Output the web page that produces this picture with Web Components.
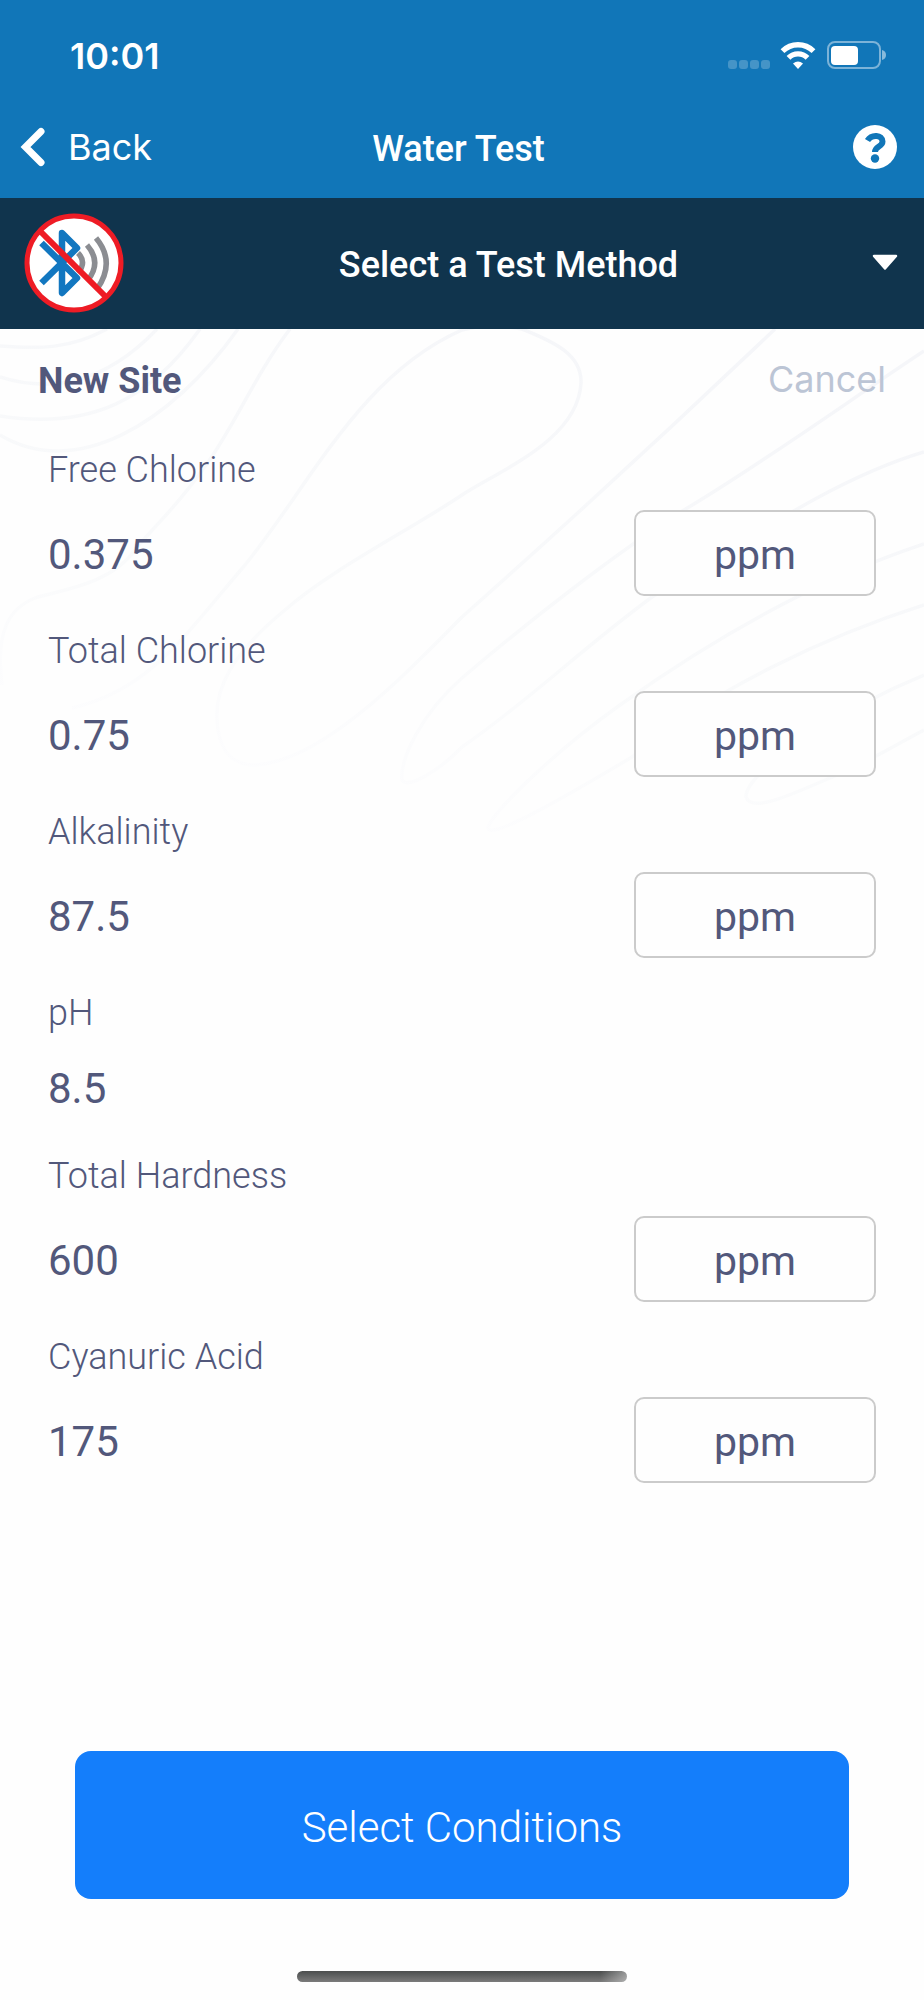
<!DOCTYPE html>
<html lang="en">
<head>
<meta charset="utf-8">
<meta name="viewport" content="width=device-width, initial-scale=1">
<title>Water Test</title>
<style>
  html, body { margin: 0; padding: 0; }
  body { background: #fefefe; color: #52587b; font-family: Roboto, "Open Sans", sans-serif; }
</style>
</head>
<body>
<water-test-page></water-test-page>

<template id="status-bar">
  <style>
    :host { display: flex; align-items: center; justify-content: space-between; height: 112px; padding: 0 37px 0 70px; box-sizing: border-box; }
    time { font: 600 36px/44px Inter, sans-serif; }
    svg { display: block; }
  </style>
  <time>10:01</time>
  <svg width="160" height="30" viewBox="727 41 160 30" aria-label="Wi-Fi connected, battery half full" role="img">
    <g fill="#fff" fill-opacity=".22">
      <rect x="728" y="60" width="9" height="9" rx="3"/><rect x="739" y="60" width="9" height="9" rx="3"/>
      <rect x="750" y="60" width="9" height="9" rx="3"/><rect x="761" y="60" width="9" height="9" rx="3"/>
    </g>
    <g fill="none" stroke="#fff" stroke-width="5.400">
      <path d="M782.500 51.200a22 22 0 0 1 31 0"/>
      <path d="M788.500 57.800a13.500 13.500 0 0 1 19 0"/>
    </g>
    <path fill="#fff" d="M793 63.500q5-4 10 0l-5 5.500z"/>
    <rect x="828" y="42" width="52" height="26" rx="7" fill="none" stroke="#fff" stroke-opacity=".45" stroke-width="2"/>
    <rect x="831" y="46" width="27" height="19" rx="4" fill="#fff"/>
    <path d="M882 50q4 1 4 5t-4 5z" fill="#fff" fill-opacity=".5"/>
  </svg>
</template>

<template id="nav-bar">
  <style>
    :host { display: grid; grid-template-columns: 1fr auto 1fr; align-items: center; height: 86px; padding: 0 27px 16px 20px; box-sizing: border-box; }
    button { border: 0; padding: 0; background: none; color: inherit; display: flex; align-items: center; cursor: pointer; }
    .back { gap: 22px; font: 400 36px/44px Inter, sans-serif; justify-self: start; }
    .help { justify-self: end; }
    h1 { margin: 0; padding-top: 4px; font-size: 36px; line-height: 44px; font-weight: 500; }
    svg { display: block; }
  </style>
  <button class="back" type="button">
    <svg width="26" height="40" viewBox="0 0 26 40" aria-hidden="true"><path d="M21 4.500 5.500 20 21 35.500" fill="none" stroke="#fff" stroke-width="7" stroke-linecap="round" stroke-linejoin="miter"/></svg>
    <slot name="back"></slot>
  </button>
  <h1><slot></slot></h1>
  <button class="help" type="button" aria-label="Help">
    <svg width="44" height="44" viewBox="0 0 44 44" aria-hidden="true">
      <circle cx="22" cy="22" r="22" fill="#fff"/>
      <path d="M14.500 15.500C18.500 9 29.500 9.500 29.500 16.500C29.500 22 22 21 22 27" fill="none" stroke="#1176b8" stroke-width="6"/>
      <circle cx="22" cy="33.500" r="4.200" fill="#1176b8"/>
    </svg>
  </button>
</template>

<template id="method-picker">
  <style>
    :host { display: block; background: #10344d; }
    button { display: flex; align-items: center; width: 100%; min-height: 131px; padding: 0 25px 2px 24px; box-sizing: border-box; border: 0; background: none; color: #fff; font: inherit; cursor: pointer; }
    .text { flex: 1; padding: 4px 0 0 22px; font-size: 36px; line-height: 44px; font-weight: 500; text-align: center; }
    svg { display: block; }
  </style>
  <button type="button" aria-haspopup="listbox">
    <svg width="100" height="100" viewBox="0 0 100 100" role="img" aria-label="Bluetooth disconnected">
      <circle cx="50" cy="50" r="47" fill="#fff"/>
      <path d="M17.500 30 53 65 38 80V20L53 35 17.500 70" fill="none" stroke="#1277c0" stroke-width="6.500" stroke-linejoin="round"/>
      <g fill="none" stroke="#8b8d92" stroke-width="5.500">
        <path d="M54 40q9 9 0 20"/>
        <path d="M63 32q15 17 1 35"/>
        <path d="M72 25q20 24 1 51"/>
      </g>
      <path d="M16 18 82 84" stroke="#ee1c25" stroke-width="6"/>
      <circle cx="50" cy="50" r="47" fill="none" stroke="#ee1c25" stroke-width="5"/>
    </svg>
    <span class="text"><slot></slot></span>
    <svg width="28" height="18" viewBox="0 0 28 18" aria-hidden="true"><path d="M3 2H25L14 14.500Z" fill="#fff" stroke="#fff" stroke-width="2.500" stroke-linejoin="round"/></svg>
  </button>
</template>

<template id="contour-lines">
  <style>
    :host { position: absolute; inset: 0 0 auto 0; z-index: -1; pointer-events: none; }
    svg { display: block; width: 100%; height: auto; }
  </style>
  <svg viewBox="0 329 924 520" aria-hidden="true">
    <defs>
      <linearGradient id="fade" gradientUnits="userSpaceOnUse" x1="620" y1="330" x2="470" y2="850">
        <stop offset="0" stop-color="#f5f6f9"/><stop offset=".6" stop-color="#f9fafb"/><stop offset="1" stop-color="#fdfdfe"/>
      </linearGradient>
    </defs>
    <g fill="none" stroke="url(#fade)" stroke-width="3.500">
      <path d="M0 346C40 349 70 349 107 329"/>
      <path d="M0 377C50 393 105 384 157 329"/>
      <path d="M0 416C90 430 150 400 200 329"/>
      <path d="M0 435C75 480 170 425 238 329"/>
      <path d="M290 329C255 375 235 425 206 465C175 510 150 530 135 550C110 585 60 590 35 598C10 608-5 630 2 685"/>
      <path d="M72 708C150 690 185 635 245 565C310 485 360 375 462 330C480 325 500 325 522 329C555 342 582 355 581 383C578 440 500 470 462 495C410 530 330 570 285 610C230 655 215 690 217 720C219 755 235 765 255 765C320 762 400 680 462 617C560 530 690 410 775 329"/>
      <path d="M924 351C850 400 760 465 684 510C620 550 530 620 462 678C420 715 400 760 402 780C407 790 440 770 462 747C530 700 580 650 652 597C740 545 830 480 924 452"/>
      <path d="M924 544C800 585 690 655 620 705C550 755 490 815 488 828C490 840 560 800 632 757C710 690 830 635 924 605"/>
      <path d="M924 675C850 705 745 770 746 797C752 815 800 790 835 776C860 766 890 748 924 730"/>
    </g>
  </svg>
</template>

<template id="site-bar">
  <style>
    :host { display: flex; align-items: center; justify-content: space-between; height: 120px; padding: 0 38px 20px; box-sizing: border-box; }
    h2 { margin: 0; padding-top: 4px; font-size: 36px; line-height: 44px; font-weight: 700; }
    button { border: 0; padding: 0; background: none; color: #bcc5d5; font: 400 36px/44px Inter, sans-serif; cursor: pointer; }
  </style>
  <h2><slot></slot></h2>
  <button type="button">Cancel</button>
</template>

<template id="reading-row">
  <style>
    :host { display: block; padding: 0 48px 35px; }
    label { display: block; margin-bottom: 19px; font-size: 36px; line-height: 42px; font-weight: 300; }
    .field { display: flex; align-items: center; justify-content: space-between; height: 85px; }
    :host(:not([unit])) .field { height: 67px; }
    input { flex: 1; min-width: 0; height: 60px; border: 0; padding: 4px 0 0; box-sizing: border-box; background: none; color: inherit; font: inherit; font-size: 42px; outline: 0; }
    select { appearance: none; width: 242px; height: 86px; box-sizing: border-box; border: 2px solid #cbcbcb; border-radius: 10px; padding: 4px 0 0; background: #fefefe; color: inherit; font: inherit; font-size: 41px; text-align: center; text-align-last: center; }
  </style>
  <label for="value"></label>
  <div class="field">
    <input id="value" type="text" inputmode="decimal">
  </div>
</template>

<template id="water-test-page">
  <style>
    :host { display: flex; flex-direction: column; min-height: 100vh; }
    header { background: #1176b8; color: #fff; }
    main { position: relative; z-index: 0; flex: 1; display: flex; flex-direction: column; }
    form { flex: 1; }
    footer { display: flex; flex-direction: column; align-items: center; padding: 0 75px 18px; }
    .primary { width: 100%; height: 148px; border: 0; border-radius: 16px; padding: 4px 0 0; background: #147efb; color: #fff; font: inherit; font-size: 42px; font-weight: 300; cursor: pointer; }
    .home { width: 330px; height: 11px; margin-top: 72px; border-radius: 6px; background: linear-gradient(90deg, #0000 92%, #fff6), linear-gradient(#4b4d4d, #7b7b7b); }
  </style>
  <header>
    <status-bar></status-bar>
    <nav-bar><span slot="back">Back</span>Water Test</nav-bar>
  </header>
  <method-picker>Select a Test Method</method-picker>
  <main>
    <contour-lines></contour-lines>
    <site-bar>New Site</site-bar>
    <form>
      <reading-row name="Free Chlorine" value="0.375" unit="ppm"></reading-row>
      <reading-row name="Total Chlorine" value="0.75" unit="ppm"></reading-row>
      <reading-row name="Alkalinity" value="87.5" unit="ppm"></reading-row>
      <reading-row name="pH" value="8.5"></reading-row>
      <reading-row name="Total Hardness" value="600" unit="ppm"></reading-row>
      <reading-row name="Cyanuric Acid" value="175" unit="ppm"></reading-row>
    </form>
    <footer>
      <button class="primary" type="button">Select Conditions</button>
      <div class="home"></div>
    </footer>
  </main>
</template>

<script>
  class TemplateElement extends HTMLElement {
    constructor() {
      super();
      const template = document.getElementById(this.localName);
      this.attachShadow({ mode: "open" }).append(document.importNode(template.content, true));
    }
  }

  class ReadingRow extends TemplateElement {
    connectedCallback() {
      const root = this.shadowRoot;
      root.querySelector("label").textContent = this.getAttribute("name");
      root.querySelector("input").setAttribute("value", this.getAttribute("value"));
      const unit = this.getAttribute("unit");
      if (unit && !root.querySelector("select")) {
        const select = document.createElement("select");
        select.setAttribute("aria-label", this.getAttribute("name") + " unit");
        select.add(new Option(unit));
        root.querySelector(".field").append(select);
      }
    }
  }

  for (const name of ["status-bar", "nav-bar", "method-picker", "contour-lines", "site-bar"]) {
    customElements.define(name, class extends TemplateElement {});
  }
  customElements.define("reading-row", ReadingRow);
  customElements.define("water-test-page", class extends TemplateElement {});
</script>
</body>
</html>
